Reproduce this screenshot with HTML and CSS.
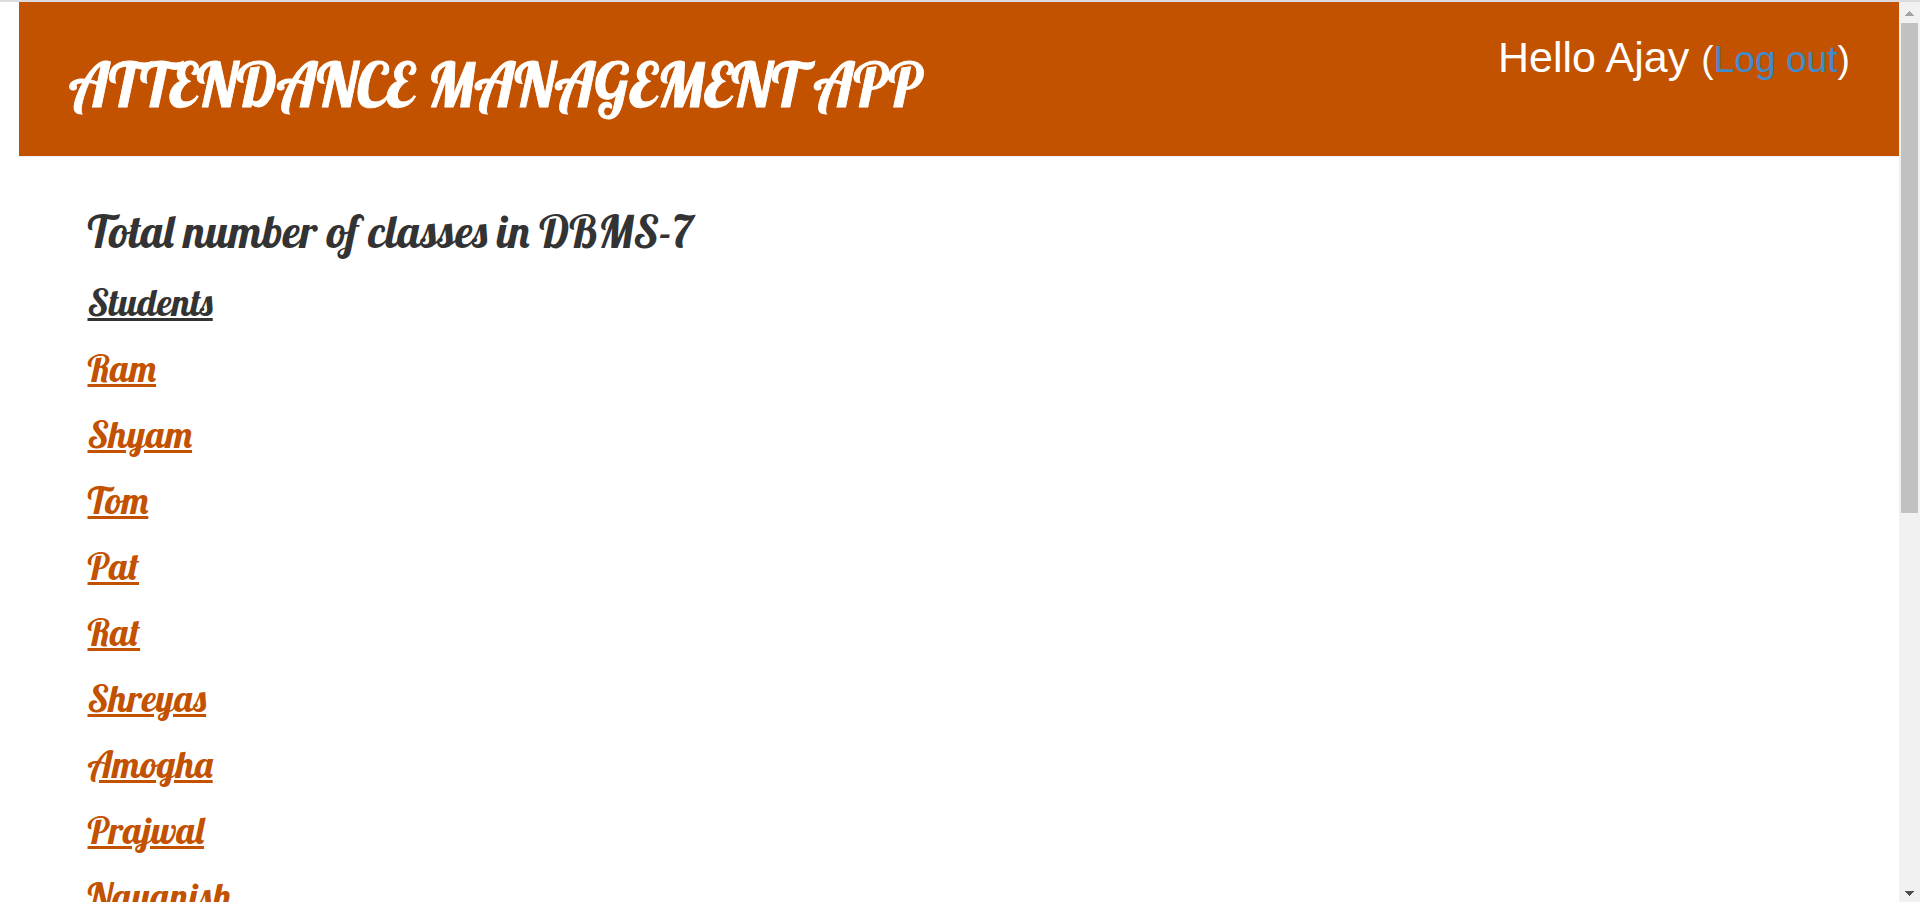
FILE: index.html
```html
<!DOCTYPE html>
<html lang="en">
<head>
<meta charset="utf-8">
<title>Attendance Management App</title>
<link rel="stylesheet" href="styles.css">
</head>
<body>
<div class="topline"></div>
<div class="viewport">
  <div class="page">
    <header class="header">
      <h1 class="title script">ATTENDANCE MANAGEMENT APP</h1>
      <p class="greeting">Hello Ajay <small>(<a class="logout" href="#">Log out</a>)</small></p>
    </header>
    <main class="content">
      <h2 class="total script">Total number of classes in DBMS-7</h2>
      <ul class="students">
        <li><span class="name heading script">Students</span></li>
        <li><a class="name script" href="#">Ram</a></li>
        <li><a class="name script" href="#">Shyam</a></li>
        <li><a class="name script" href="#">Tom</a></li>
        <li><a class="name script" href="#">Pat</a></li>
        <li><a class="name script" href="#">Rat</a></li>
        <li><a class="name script" href="#">Shreyas</a></li>
        <li><a class="name script" href="#">Amogha</a></li>
        <li><a class="name script" href="#">Prajwal</a></li>
        <li><a class="name script" href="#">Nayanish</a></li>
      </ul>
    </main>
  </div>
  <div class="scrollbar">
    <svg class="arrow arrow-up" viewBox="0 0 9 5" width="9" height="5" shape-rendering="crispEdges"><path d="M4 0h1v1h1v1h1v1h1v1h1v1H0V4h1V3h1V2h1V1h1z"/></svg>
    <div class="thumb"></div>
    <svg class="arrow arrow-down" viewBox="0 0 9 5" width="9" height="5" shape-rendering="crispEdges"><path d="M0 0h9v1H8v1H7v1H6v1H5v1H4V4H3V3H2V2H1V1H0z"/></svg>
  </div>
</div>
</body>
</html>
```
FILE: styles.css
```css
* { box-sizing: border-box; }
html, body { height: 100%; overflow: hidden; }
body {
  margin: 0;
  display: flex;
  flex-direction: column;
  background: #fff;
  color: #333;
  font-family: "Liberation Sans", Arial, sans-serif;
}
.topline { flex: none; height: 2px; background: #dcdce0; }
.viewport { flex: 1; min-height: 0; display: flex; }
.page { flex: 1; min-width: 0; padding-left: 19px; overflow: hidden; }

.script {
  font-family: "Lobster", "Liberation Serif", serif;
  font-weight: 500;
  white-space: nowrap;
}

.header {
  display: flex;
  justify-content: space-between;
  align-items: flex-start;
  height: 155px;
  padding: 31px 49px 0 50px;
  background: #c25100;
  border-bottom: 1px solid #eee;
  color: #fff;
}
.title {
  margin: 13px 0 0;
  font-size: 60px;
  line-height: 77px;
  -webkit-text-stroke: .8px #fff;
}
.greeting { margin: 0; font-size: 43px; line-height: 48px; white-space: nowrap; }
.greeting small { font-size: 37.2px; }
.logout { color: #428bca; text-decoration: none; }

.content { padding: 46px 0 0 68.5px; }
.total {
  margin: 0 0 9px;
  font-size: 45px;
  line-height: 57px;
}
.students { margin: 0; padding: 0; list-style: none; }
.students li { height: 66px; }
.name {
  display: inline-block;
  font-size: 37.5px;
  line-height: 66px;
  color: #c25100;
  text-decoration: underline;
}
.heading { color: #333; }

.scrollbar {
  flex: none;
  display: flex;
  flex-direction: column;
  width: 21px;
  padding: 9px 2px 6px;
  background: #f1f1f1;
}
.arrow { flex: none; align-self: center; }
.arrow-up { fill: #a3a3a3; }
.arrow-down { fill: #505050; margin-top: auto; }
.thumb { flex: none; height: 490px; margin-top: 7px; background: #c1c1c1; }
```
